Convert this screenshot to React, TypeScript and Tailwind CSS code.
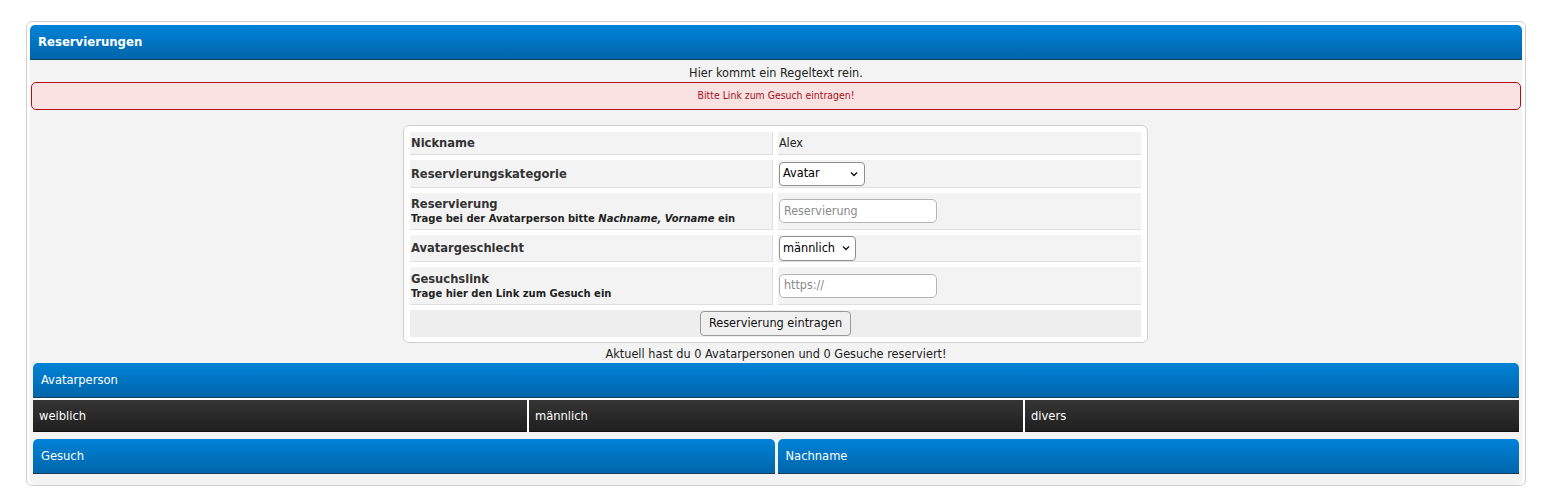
import React from "react";

const F = { fontFamily: '"DejaVu Sans Condensed", "DejaVu Sans", sans-serif' };

function Chevron() {
  return (
    <svg width="10" height="10" viewBox="0 0 10 10" className="shrink-0">
      <path d="M2 3.5 L5 6.5 L8 3.5" fill="none" stroke="#111" strokeWidth="1.3" />
    </svg>
  );
}

const blue = "bg-[linear-gradient(to_bottom,#0083d8,#0065aa)] border-b border-[#163f5c] rounded-t-[5px] text-white";
const dark = "bg-[linear-gradient(to_bottom,#353535,#1f1f1f)] border-b border-[#0f0f0f] text-white";

export default function App() {
  return (
    <div className="w-[1544px] h-[494px] bg-white overflow-hidden text-[#222]" style={F}>
      <div className="ml-[26px] mt-[21px] w-[1500px] h-[465px] border border-[#cfcfcf] rounded-[6px] bg-white pt-[3px] px-[3px] flex flex-col">
        <div className={`${blue} h-[35px] flex items-center px-[8px] font-bold text-[13px]`}>Reservierungen</div>
        <div className="flex-1 bg-[#f3f3f3] flex flex-col rounded-b-[5px]">
          <div className="text-center text-[12.6px] h-[22px] pt-[5px] leading-[16px]">Hier kommt ein Regeltext rein.</div>
          <div className="mx-[1px] h-[28px] border border-[#b3121b] rounded-[5px] bg-[#fae2e3] text-[#a1101a] text-[10.4px] flex items-center justify-center">
            Bitte Link zum Gesuch eintragen!
          </div>
          <div className="mt-[15px] ml-[373px] w-[745px] bg-white border border-[#cfcfcf] rounded-[6px] pt-[6px] pb-[5px] pl-[6px] pr-[5px]">
            <div className="grid grid-cols-[363px_363px] gap-x-[5px] gap-y-[5px]">
              <Label h="h-[23px]" title="Nickname" />
              <Value h="h-[23px]">
                <span className="text-[12.4px]">Alex</span>
              </Value>
              <Label h="h-[28px]" title="Reservierungskategorie" />
              <Value h="h-[28px]">
                <div className="w-[86px] h-[24px] border border-[#8f8f8f] rounded-[4px] bg-white flex items-center justify-between pl-[3px] pr-[5px] text-[12.6px] text-black">
                  <span>Avatar</span>
                  <Chevron />
                </div>
              </Value>
              <Label h="h-[37px]" title="Reservierung" sub={<>Trage bei der Avatarperson bitte <i>Nachname, Vorname</i> ein</>} />
              <Value h="h-[37px]">
                <div className="w-[158px] h-[24px] border border-[#b5b5b5] rounded-[5px] bg-white flex items-center px-[4px] text-[12.4px] text-[#8a8a8a]">Reservierung</div>
              </Value>
              <Label h="h-[27px]" title="Avatargeschlecht" />
              <Value h="h-[27px]">
                <div className="w-[77px] h-[25px] border border-[#8f8f8f] rounded-[4px] bg-white flex items-center justify-between pl-[3px] pr-[4px] text-[12.6px] text-black">
                  <span>männlich</span>
                  <Chevron />
                </div>
              </Value>
              <Label h="h-[38px]" title="Gesuchslink" sub="Trage hier den Link zum Gesuch ein" />
              <Value h="h-[38px]">
                <div className="w-[158px] h-[24px] border border-[#b5b5b5] rounded-[5px] bg-white flex items-center px-[4px] text-[12.4px] text-[#8a8a8a]">https://</div>
              </Value>
              <div className="col-span-2 h-[27px] bg-[#eeeeee] flex items-center justify-center">
                <div className="h-[25px] px-[8px] border border-[#9a9a9a] rounded-[4px] bg-[#f0f0f0] flex items-center text-[12.6px] text-[#111]">Reservierung eintragen</div>
              </div>
            </div>
          </div>
          <div className="text-center text-[12.6px] h-[20px] pt-[3px] leading-[15px]">Aktuell hast du 0 Avatarpersonen und 0 Gesuche reserviert!</div>
          <div className="px-[3px] flex flex-col">
            <div className={`${blue} h-[35px] flex items-center px-[8px] text-[12.8px]`}>Avatarperson</div>
            <div className="h-[2px] bg-white" />
            <div className="grid grid-cols-3 gap-x-[2px] bg-white">
              <div className={`${dark} h-[32px] flex items-center px-[6px] text-[12.8px]`}>weiblich</div>
              <div className={`${dark} h-[32px] flex items-center px-[6px] text-[12.8px]`}>männlich</div>
              <div className={`${dark} h-[32px] flex items-center px-[6px] text-[12.8px]`}>divers</div>
            </div>
            <div className="mt-[7px] grid grid-cols-2 gap-x-[3px]">
              <div className={`${blue} h-[35px] flex items-center px-[8px] text-[12.8px]`}>Gesuch</div>
              <div className={`${blue} h-[35px] flex items-center px-[8px] text-[12.8px]`}>Nachname</div>
            </div>
          </div>
        </div>
      </div>
    </div>
  );
}

function Label({ h, title, sub }: { h: string; title: string; sub?: React.ReactNode }) {
  return (
    <div className={`${h} bg-[#f3f3f3] border-b border-r border-[#dedede] flex flex-col justify-center pl-[1px]`}>
      <div className="font-bold text-[12.8px] leading-[16px] text-[#333]">{title}</div>
      {sub && <div className="font-bold text-[11.1px] leading-[14px] text-[#222]">{sub}</div>}
    </div>
  );
}

function Value({ h, children }: { h: string; children: React.ReactNode }) {
  return <div className={`${h} bg-[#f3f3f3] border-b border-[#dedede] flex items-center pl-[1px]`}>{children}</div>;
}
